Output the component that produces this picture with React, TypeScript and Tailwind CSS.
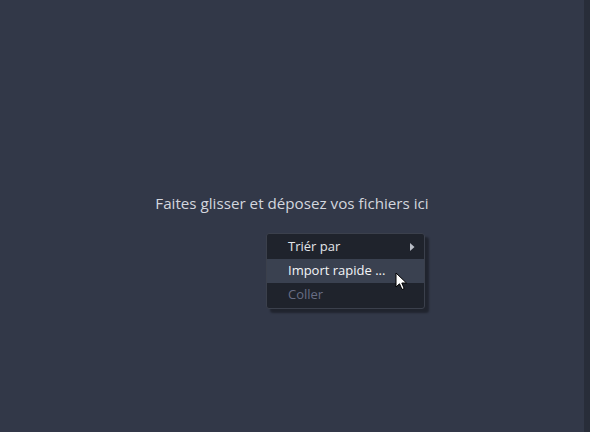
export default function App() {
  return (
    <div className="relative flex h-[432px] w-[590px] bg-[#323848] font-['Open_Sans','Noto_Sans',sans-serif]">
      <div className="flex flex-1 flex-col items-center pt-[192px]">
        <p className="text-[15.2px] text-[#d3d6de]">Faites glisser et déposez vos fichiers ici</p>
      </div>
      <div className="w-[6px] bg-[#282d39]" />

      {/* context menu */}
      <div className="absolute left-[266px] top-[233px] w-[159px] rounded-[3px] border border-[#3b404c] bg-[#1f232c] py-[1px] shadow-[4px_4px_2px_rgba(0,0,0,0.35)]">
        <div className="flex h-[24px] items-center justify-between pl-[21px] pr-[9px] text-[13px] text-[#e2e5ea]">
          <span>Triér par</span>
          <svg width="5" height="8" viewBox="0 0 5 8">
            <path d="M0 0 L4.5 4 L0 8 Z" fill="#b9bdc6" />
          </svg>
        </div>
        <div className="relative flex h-[24px] items-center bg-[#3a4150] pl-[21px] text-[13px] text-[#f4f5f7]">
          <span>Import rapide ...</span>
          <svg className="absolute left-[128px] top-[13px]" width="13" height="19" viewBox="0 0 13 19">
            <path d="M1 1 L1 15 L4.5 11.8 L7 17.5 L9.2 16.5 L6.8 11 L11.5 11 Z" fill="#ffffff" stroke="#000000" strokeWidth="1" strokeLinejoin="round" />
          </svg>
        </div>
        <div className="flex h-[24px] items-center pl-[21px] text-[13px] text-[#686d84]">
          <span>Coller</span>
        </div>
      </div>
    </div>
  )
}
